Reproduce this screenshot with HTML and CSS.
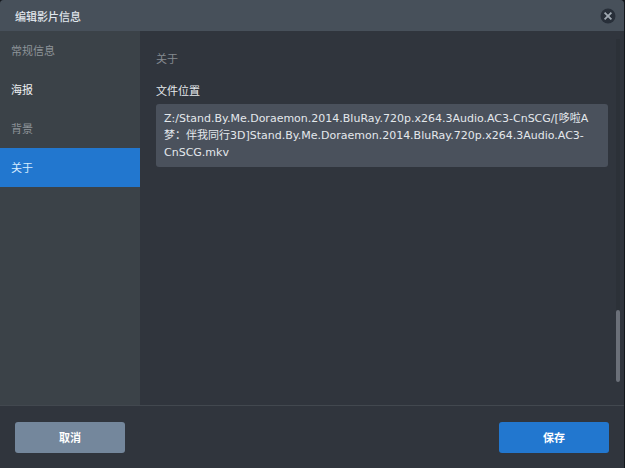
FILE: index.html
```html
<!DOCTYPE html>
<html lang="zh-CN">
<head>
    <meta charset="UTF-8">
    <meta name="viewport" content="width=device-width, initial-scale=1.0">
    <title>编辑影片信息</title>
    <link rel="stylesheet" href="styles.css">
</head>
<body>
    <div class="dialog">

        <header class="header">
            <h1>编辑影片信息</h1>
            <button class="close" type="button" aria-label="关闭">
                <svg width="16" height="16" viewBox="0 0 16 16">
                    <circle cx="8" cy="8" r="7.5" fill="#282f39"/>
                    <path d="M4.6 4.6L11.4 11.4M11.4 4.6L4.6 11.4" stroke="#a0a9b2" stroke-width="1.8" fill="none"/>
                </svg>
            </button>
        </header>

        <div class="main">
            <nav class="sidebar">
                <a href="#general">常规信息</a>
                <a class="bright" href="#poster">海报</a>
                <a href="#backdrop">背景</a>
                <a class="active" href="#about">关于</a>
            </nav>

            <section class="content" id="about">
                <h2>关于</h2>
                <label for="path">文件位置</label>
                <textarea id="path" rows="3" readonly>Z:/Stand.By.Me.Doraemon.2014.BluRay.720p.x264.3Audio.AC3-CnSCG/[哆啦A梦：伴我同行3D]Stand.By.Me.Doraemon.2014.BluRay.720p.x264.3Audio.AC3-CnSCG.mkv</textarea>
            </section>

            <div class="scrollbar">
                <div class="thumb"></div>
            </div>
        </div>

        <footer class="footer">
            <button class="btn cancel" type="button">取消</button>
            <button class="btn save" type="button">保存</button>
        </footer>

    </div>
</body>
</html>
```

FILE: styles.css
```css
* {
    box-sizing: border-box;
}

body {
    margin: 0;
    padding-right: 1px;
    min-height: 100vh;
    display: flex;
    background-color: #14181d;
    font-family: "DejaVu Sans", "Noto Sans CJK SC", sans-serif;
    font-size: 11px;
    color: #e4e8ec;
}

button,
textarea {
    font-family: inherit;
    font-size: inherit;
}

.dialog {
    flex: 1;
    display: flex;
    flex-direction: column;
    border-radius: 4px 4px 0 0;
    overflow: hidden;
    background-color: #30353d;
}

.header {
    display: flex;
    align-items: center;
    justify-content: space-between;
    height: 31px;
    padding: 0 8px 0 15px;
    background-color: #47505a;
}

.header h1 {
    margin: 0;
    font-size: 11px;
    font-weight: 500;
    color: #e0e6ec;
}

.close {
    display: flex;
    padding: 0;
    border: none;
    background: none;
    cursor: pointer;
}

.main {
    flex: 1;
    display: flex;
}

.sidebar {
    flex: 0 0 140px;
    background-color: #3b4248;
}

.sidebar a {
    display: block;
    padding: 2px 11px 0;
    line-height: 37px;
    color: #8e9499;
    text-decoration: none;
}

.sidebar a.bright {
    color: #eef0f2;
}

.sidebar a.active {
    background-color: #2277cf;
    color: #d5ecff;
}

.content {
    flex: 1;
    padding: 21px 8px 0 16px;
}

.content h2 {
    margin: 0 0 16px;
    font-size: 11px;
    font-weight: 400;
    line-height: 16px;
    color: #858a90;
}

.content label {
    display: block;
    margin-bottom: 4px;
    line-height: 16px;
}

.content textarea {
    display: block;
    width: 100%;
    padding: 6px 8px;
    border: none;
    border-radius: 3px;
    outline: none;
    overflow: hidden;
    resize: none;
    font-family: "DejaVu Sans", "Noto Sans CJK TC", sans-serif;
    line-height: 17px;
    background-color: #4a515c;
    color: #e4e8ec;
}

.scrollbar {
    display: flex;
    flex-direction: column;
    justify-content: flex-end;
    width: 4px;
    margin: 8px 4px 23px 0;
    background-color: #2c3138;
}

.thumb {
    height: 21%;
    border-radius: 2px;
    background-color: #6b7079;
}

.footer {
    display: flex;
    align-items: center;
    justify-content: space-between;
    height: 63px;
    padding: 0 15px;
    border-top: 1px solid #42484f;
}

.btn {
    width: 110px;
    height: 31px;
    padding: 0;
    border: none;
    border-radius: 3px;
    font-weight: 700;
    color: #fff;
    cursor: pointer;
}

.cancel {
    background-color: #74879c;
}

.save {
    background-color: #2277cf;
}
```
